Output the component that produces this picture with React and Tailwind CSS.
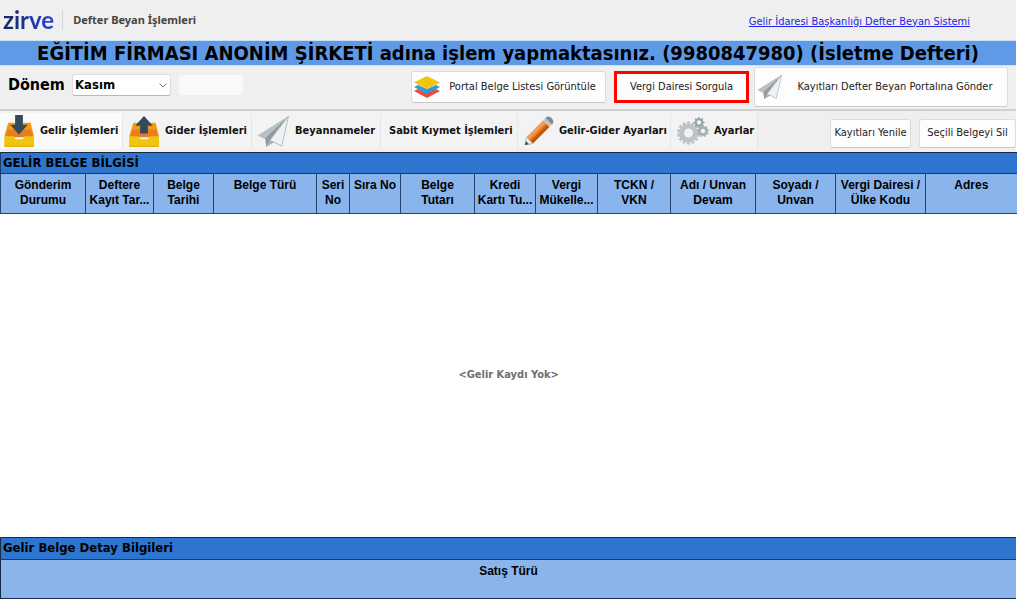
import React from "react";

const COLUMNS = [
  { lines: ["Gönderim", "Durumu"], width: "w-[85px]" },
  { lines: ["Deftere", "Kayıt Tar..."], width: "w-[68px]" },
  { lines: ["Belge", "Tarihi"], width: "w-[60px]" },
  { lines: ["Belge Türü"], width: "w-[103px]" },
  { lines: ["Seri", "No"], width: "w-[33px]" },
  { lines: ["Sıra No"], width: "w-[51px]" },
  { lines: ["Belge", "Tutarı"], width: "w-[74px]" },
  { lines: ["Kredi", "Kartı Tu..."], width: "w-[61px]" },
  { lines: ["Vergi", "Mükelle..."], width: "w-[62px]" },
  { lines: ["TCKN /", "VKN"], width: "w-[73px]" },
  { lines: ["Adı / Unvan", "Devam"], width: "w-[85px]" },
  { lines: ["Soyadı /", "Unvan"], width: "w-[80px]" },
  { lines: ["Vergi Dairesi /", "Ülke Kodu"], width: "w-[90px]" },
  { lines: ["Adres"], width: "w-[91px]" },
];

function TrayIcon({ up }) {
  return (
    <svg viewBox="0 0 32 34" className="h-[33px] w-8 shrink-0" aria-hidden="true">
      <path d="M5 8h23l3.500 14H.8z" fill="#f39c12" />
      <path d="M4 15h24.500l2 8H2z" fill="#e67e22" />
      <path d="M.8 22h9.700l2 3h7.500l2-3h9.500v10q0 1-1 1H1.800q-1 0-1-1z" fill="#f1c40f" />
      <path d="M.8 31.500h30.700v.5q0 1-1 1H1.800q-1 0-1-1z" fill="#e6b40c" />
      {up ? (
        <path d="M16 1l9 10h-5v8h-8v-8H7z" fill="#34495e" />
      ) : (
        <path d="M12 0h8v10h5l-9 10-9-10h5z" fill="#34495e" />
      )}
    </svg>
  );
}

function PlaneIcon({ className }) {
  return (
    <svg viewBox="0 0 34 34" className={className} aria-hidden="true">
      <path d="M33 1L1 21l8 4z" fill="#b9bfc2" />
      <path d="M33 1L9 24l1 9 4-7z" fill="#8f9a9d" />
      <path d="M33 1L14 26l12 6z" fill="#eef2f3" stroke="#b4bcbf" strokeWidth="1" />
      <path d="M10 33l4-7 4 2z" fill="#a7b0b3" />
    </svg>
  );
}

function LayersIcon() {
  return (
    <svg viewBox="0 0 26 22" className="h-[22px] w-[26px] shrink-0" aria-hidden="true">
      <path d="M0 15l4-2 9 4 9-4 4 2-13 7z" fill="#e74c3c" />
      <path d="M0 11l4-2 9 4 9-4 4 2-13 7z" fill="#3498db" />
      <path d="M13 0l13 6.500-13 6.500L0 6.500z" fill="#f1c40f" />
    </svg>
  );
}

function PencilIcon() {
  return (
    <svg viewBox="0 0 30 30" className="h-[30px] w-[30px] shrink-0" aria-hidden="true">
      <path d="M1 29l1.500-8 6.500 6.500z" fill="#ecf0f1" stroke="#95a5a6" strokeWidth=".6" />
      <path d="M1 29l.8-4 3.200 3.200z" fill="#34495e" />
      <path d="M2.500 21L19 4.500l3.200 3.200L5.700 24.200z" fill="#f39c5a" />
      <path d="M5 23.500L21.500 7l2 2L7 25.500z" fill="#e67e22" />
      <path d="M6.500 25L23 8.500l2.500 2.500L9 27.500z" fill="#c8560a" />
      <path d="M19 4.500l2.500-2.500L28 8.500 25.500 11z" fill="#bdc3c7" />
      <path d="M21.500 2q3-3 6.200.3T28 8.500z" fill="#7f8c8d" />
    </svg>
  );
}

function Gear({ cx, cy, r, teeth, color }) {
  const step = 360 / teeth;
  return (
    <g transform={`translate(${cx} ${cy})`}>
      {Array.from({ length: teeth }, (_, i) => (
        <rect
          key={i}
          x={-r * 0.13}
          y={-r}
          width={r * 0.26}
          height={r * 0.4}
          fill={color}
          transform={`rotate(${i * step})`}
        />
      ))}
      <circle r={r * 0.6} fill="none" stroke={color} strokeWidth={r * 0.42} />
    </g>
  );
}

function GearsIcon() {
  return (
    <svg viewBox="0 0 32 28" className="h-7 w-8 shrink-0" aria-hidden="true">
      <Gear cx={11.5} cy={16} r={11.5} teeth={14} color="#bdc3c7" />
      <Gear cx={22} cy={5.500} r={5.500} teeth={8} color="#95a5a6" />
      <Gear cx={26} cy={14} r={6} teeth={9} color="#a3aeb0" />
    </svg>
  );
}

function Tab({ icon, children, className }) {
  return (
    <button
      type="button"
      className={`flex h-9 items-center whitespace-nowrap border-r border-[#e6e6e6] text-[11px] font-bold text-[#111] ${className}`}
    >
      {icon}
      {children}
    </button>
  );
}

const BUTTON =
  "flex items-center whitespace-nowrap rounded-[3px] border border-[#dcdcdc] border-b-[#c8c8c8] bg-[#fdfdfd] text-[11px] text-[#222]";

export default function App() {
  return (
    <div className="min-h-screen bg-white pr-2 font-['DejaVu_Sans_Condensed','DejaVu_Sans',sans-serif] text-black">
      <header className="flex h-10 items-center justify-between bg-[#efefef] pl-[3px] pr-[46px]">
        <div className="flex items-center">
          <span className="bg-linear-to-r from-[#14285f] to-[#2b43dc] bg-clip-text font-['Lato',sans-serif] text-2xl leading-8 font-bold text-transparent">
            zirve
          </span>
          <span className="ml-2 h-5 w-px bg-[#d6d6d6]" />
          <h1 className="ml-2.5 font-['Noto_Sans',sans-serif] text-[11px] font-bold text-[#444]">
            Defter Beyan İşlemleri
          </h1>
        </div>
        <a href="#portal" className="pt-1 text-[11px] text-[#2222ee] underline">
          Gelir İdaresi Başkanlığı Defter Beyan Sistemi
        </a>
      </header>

      <p className="h-[26px] whitespace-nowrap border-y border-[#cfe0f5] bg-[#5e9ae6] text-center text-xl leading-6 font-bold">
        EĞİTİM FİRMASI ANONİM ŞİRKETİ adına işlem yapmaktasınız. (9980847980) (İsletme Defteri)
      </p>

      <div className="flex h-[45px] items-start justify-between border-b-2 border-[#d0d0d0] bg-[#efefef] pt-px pr-2 pl-2">
        <div className="flex items-center pt-[7px]">
          <label htmlFor="period" className="w-16 text-base leading-5 font-bold">
            Dönem
          </label>
          <div className="flex items-center">
            <select
              id="period"
              className="h-[22px] w-[99px] appearance-none rounded-[3px] border border-[#dcdcdc] border-b-[#b8b8b8] bg-white pl-0.5 text-[13px] leading-5 font-bold"
            >
              <option>Kasım</option>
            </select>
            <svg viewBox="0 0 8 5" className="pointer-events-none -ml-3 h-[5px] w-2" aria-hidden="true">
              <path d="M.5.5L4 4 7.500.5" fill="none" stroke="#777" />
            </svg>
          </div>
          <input aria-label="Yıl" className="ml-3 h-5 w-16 rounded-[3px] bg-[#f9f9f9]" />
        </div>
        <div className="flex items-center">
          <button type="button" className={`${BUTTON} h-8 w-[195px] pl-0.5`}>
            <LayersIcon />
            <span className="flex-1">Portal Belge Listesi Görüntüle</span>
          </button>
          <button
            type="button"
            className="ml-2 h-8 w-[135px] whitespace-nowrap border-3 border-[#ff0000] bg-[#fdfdfd] text-[11px] text-[#222]"
          >
            Vergi Dairesi Sorgula
          </button>
          <button type="button" className={`${BUTTON} ml-[5px] h-10 w-[254px] pl-px`}>
            <PlaneIcon className="h-[26px] w-[27px] shrink-0" />
            <span className="flex-1">Kayıtları Defter Beyan Portalına Gönder</span>
          </button>
        </div>
      </div>

      <div className="flex h-[41px] items-start justify-between bg-[#efefef]">
        <nav className="flex items-center bg-[#f3f3f3] pt-0.5">
          <Tab icon={<TrayIcon />} className="w-[123px] gap-[5px] bg-[#fafafa] pl-[3px]">
            Gelir İşlemleri
          </Tab>
          <Tab icon={<TrayIcon up />} className="w-[129px] gap-[5px] pl-[5px]">
            Gider İşlemleri
          </Tab>
          <Tab icon={<PlaneIcon className="h-[33px] w-[34px] shrink-0" />} className="w-[129px] gap-[5px] pl-1">
            Beyannameler
          </Tab>
          <Tab className="w-[137px] pl-2">Sabit Kıymet İşlemleri</Tab>
          <Tab icon={<PencilIcon />} className="w-[153px] gap-[5px] pl-1.5">
            Gelir-Gider Ayarları
          </Tab>
          <Tab icon={<GearsIcon />} className="w-[87px] gap-[5px] pl-1.5">
            Ayarlar
          </Tab>
        </nav>
        <div className="flex gap-2 pt-2">
          <button type="button" className={`${BUTTON} h-[29px] w-[81px] justify-center`}>
            Kayıtları Yenile
          </button>
          <button type="button" className={`${BUTTON} h-[29px] w-[97px] justify-center`}>
            Seçili Belgeyi Sil
          </button>
        </div>
      </div>

      <table className="w-full table-fixed border-collapse border-t border-[#1b2a44]">
        <colgroup>
          {COLUMNS.map((c) => (
            <col key={c.lines.join(" ")} className={c.width} />
          ))}
        </colgroup>
        <thead>
          <tr>
            <th
              colSpan={COLUMNS.length}
              className="h-[21px] border-b border-l border-[#1b3a6b] bg-[#2e75d0] px-0.5 text-left text-[13px] leading-5 font-bold"
            >
              GELİR BELGE BİLGİSİ
            </th>
          </tr>
          <tr>
            {COLUMNS.map((c) => (
              <th
                key={c.lines.join(" ")}
                scope="col"
                className="h-10 whitespace-nowrap border-r border-b border-[#24436f] bg-[#89b4ec] pt-1 align-top font-['Liberation_Sans',sans-serif] text-xs leading-[15px] font-bold first:border-l last:border-r-0"
              >
                {c.lines.map((line) => (
                  <span key={line} className="block">
                    {line}
                  </span>
                ))}
              </th>
            ))}
          </tr>
        </thead>
        <tbody>
          <tr>
            <td
              colSpan={COLUMNS.length}
              className="h-[323px] bg-white text-center align-middle text-[11px] font-bold text-[#707070]"
            >
              &lt;Gelir Kaydı Yok&gt;
            </td>
          </tr>
        </tbody>
      </table>

      <table className="w-full border-collapse border border-r-0 border-[#1b2a44]">
        <thead>
          <tr>
            <th className="h-[22px] border-b border-[#1b3a6b] bg-[#2e75d0] px-0.5 text-left text-[13px] leading-5 font-bold">
              Gelir Belge Detay Bilgileri
            </th>
          </tr>
          <tr>
            <th
              scope="col"
              className="h-[39px] bg-[#89b4ec] pt-1 align-top font-['Liberation_Sans',sans-serif] text-xs leading-[15px] font-bold"
            >
              Satış Türü
            </th>
          </tr>
        </thead>
      </table>
    </div>
  );
}
